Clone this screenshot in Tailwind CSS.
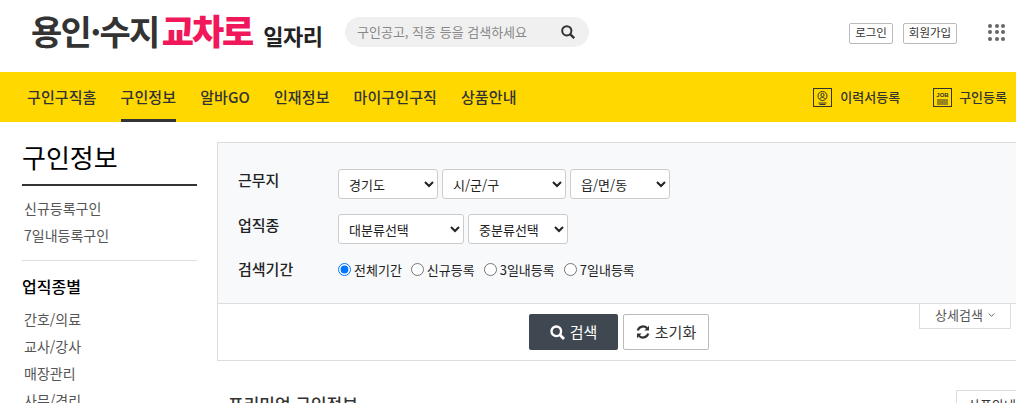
<!DOCTYPE html>
<html lang="ko">
<head>
  <meta charset="UTF-8" />
  <title>구인정보</title>
  <script src="https://cdn.jsdelivr.net/npm/@tailwindcss/browser@4"></script>
</head>
<body class="h-[403px] w-[1016px] overflow-hidden bg-white font-['Noto_Sans_CJK_KR',sans-serif] text-[#333]">

  <!-- 상단 헤더 -->
  <header class="flex h-[72px] items-center pb-[8px]">
    <a href="#" class="ml-[31px] flex w-[292px] items-baseline whitespace-nowrap">
      <span class="text-[34px] leading-[44px] font-bold tracking-[-1.7px] text-[#333]">용인·수지</span>
      <span class="ml-[3px] text-[35px] leading-[44px] font-black tracking-[-2px] text-[#f0185a]">교차로</span>
      <span class="ml-[11px] text-[22px] leading-[44px] font-bold tracking-[-0.5px] text-[#222]">일자리</span>
    </a>
    <div class="ml-[22px] flex h-[30px] w-[244px] items-center justify-between rounded-full bg-[#f0f0f0] pr-[14px] pl-[12px]">
      <span class="text-[13px] text-[#888]">구인공고, 직종 등을 검색하세요</span>
      <svg class="h-[14px] w-[14px]" viewBox="0 0 14 14" fill="none" stroke="#333" stroke-width="2"><circle cx="5.8" cy="5.8" r="4.6"/><path d="M9.2 9.2 13.2 13.2" stroke-width="2.4"/></svg>
    </div>
    <div class="ml-[260px] flex gap-[10px] pt-[2px]">
      <a href="#" class="flex h-[21px] w-[44px] items-center justify-center rounded-[2px] border border-[#bbb] text-[11.5px] text-[#333]">로그인</a>
      <a href="#" class="flex h-[21px] w-[54px] items-center justify-center rounded-[2px] border border-[#bbb] text-[11.5px] text-[#333]">회원가입</a>
    </div>
    <div class="ml-[31px] grid grid-cols-3 gap-[2.5px]">
      <i class="h-[4px] w-[4px] rounded-full bg-[#666]"></i><i class="h-[4px] w-[4px] rounded-full bg-[#666]"></i><i class="h-[4px] w-[4px] rounded-full bg-[#666]"></i>
      <i class="h-[4px] w-[4px] rounded-full bg-[#666]"></i><i class="h-[4px] w-[4px] rounded-full bg-[#666]"></i><i class="h-[4px] w-[4px] rounded-full bg-[#666]"></i>
      <i class="h-[4px] w-[4px] rounded-full bg-[#666]"></i><i class="h-[4px] w-[4px] rounded-full bg-[#666]"></i><i class="h-[4px] w-[4px] rounded-full bg-[#666]"></i>
    </div>
  </header>

  <!-- 메인 메뉴 -->
  <nav class="flex h-[50px] items-stretch bg-[#ffd800] pl-[27px] text-[15px] font-medium tracking-[0.1px] text-[#333]">
    <div class="flex gap-[24px]">
      <a href="#" class="flex items-center">구인구직홈</a>
      <a href="#" class="flex items-center border-b-[3px] border-[#333] pt-[3px]">구인정보</a>
      <a href="#" class="flex items-center">알바GO</a>
      <a href="#" class="flex items-center">인재정보</a>
      <a href="#" class="flex items-center">마이구인구직</a>
      <a href="#" class="flex items-center">상품안내</a>
    </div>
    <div class="ml-auto flex items-center pr-[9px] text-[13px] tracking-normal">
      <a href="#" class="flex items-center gap-[8px]">
        <svg class="h-[19px] w-[19px]" viewBox="0 0 19 19" fill="none" stroke="#333"><rect x=".5" y=".5" width="18" height="18"/><circle cx="9.5" cy="8" r="4.5"/><circle cx="9.5" cy="7" r="1.6"/><path d="M7 11c0-2 5-2 5 0M5.5 15h8M6.5 16.5h6"/></svg>
        이력서등록
      </a>
      <a href="#" class="ml-[33px] flex items-center gap-[7px]">
        <svg class="h-[19px] w-[19px]" viewBox="0 0 19 19" fill="none" stroke="#333"><rect x=".5" y=".5" width="18" height="18"/><text x="9.5" y="8.5" text-anchor="middle" font-size="6" font-weight="700" fill="#333" stroke="none" font-family="'Liberation Sans',sans-serif">JOB</text><path d="M4 12h11M4 14h11M4 16h11"/></svg>
        구인등록
      </a>
    </div>
  </nav>

  <div class="flex items-start">
    <!-- 왼쪽 메뉴 -->
    <aside class="ml-[22px] w-[175px] shrink-0">
      <h1 class="flex h-[64px] items-center border-b-2 border-[#333] pt-[8px] text-[26px] leading-none font-normal text-black">구인정보</h1>
      <ul class="mt-[9px] border-b border-[#ddd] pb-[11px] text-[14px] text-[#555]">
        <li class="flex h-[27px] items-center pl-[2px]">신규등록구인</li>
        <li class="flex h-[27px] items-center pl-[2px]">7일내등록구인</li>
      </ul>
      <h2 class="mt-[12px] flex h-[25px] items-center text-[16px] font-medium text-black">업직종별</h2>
      <ul class="mt-[8px] text-[14px] text-[#555]">
        <li class="flex h-[27px] items-center pl-[2px]">간호/의료</li>
        <li class="flex h-[27px] items-center pl-[2px]">교사/강사</li>
        <li class="flex h-[27px] items-center pl-[2px]">매장관리</li>
        <li class="flex h-[27px] items-center pl-[2px]">사무/경리</li>
      </ul>
    </aside>

    <!-- 검색 영역 -->
    <main class="ml-[20px] w-[799px] shrink-0 pt-[20px]">
      <section class="relative h-[219px] border-y border-l border-[#ddd]">
        <div class="h-[161px] border-b border-[#ddd] bg-[#f8f9fb] pt-[26px] pl-[20px] text-[15px]">
          <div class="flex items-start">
            <span class="w-[100px] font-medium text-[#222]">근무지</span>
            <div class="flex gap-[4px]">
              <select class="h-[30px] w-[100px] rounded-[3px] border border-[#ccc] bg-white pl-[6px] text-[13px] text-[#222]"><option>경기도</option></select>
              <select class="h-[30px] w-[124px] rounded-[3px] border border-[#ccc] bg-white pl-[6px] text-[13px] text-[#222]"><option>시/군/구</option></select>
              <select class="h-[30px] w-[100px] rounded-[3px] border border-[#ccc] bg-white pl-[6px] text-[13px] text-[#222]"><option>읍/면/동</option></select>
            </div>
          </div>
          <div class="mt-[15px] flex items-start">
            <span class="w-[100px] font-medium text-[#222]">업직종</span>
            <div class="flex gap-[4px]">
              <select class="h-[30px] w-[126px] rounded-[3px] border border-[#ccc] bg-white pl-[6px] text-[13px] text-[#222]"><option>대분류선택</option></select>
              <select class="h-[30px] w-[100px] rounded-[3px] border border-[#ccc] bg-white pl-[6px] text-[13px] text-[#222]"><option>중분류선택</option></select>
            </div>
          </div>
          <div class="mt-[14px] flex items-center">
            <span class="w-[100px] font-medium text-[#222]">검색기간</span>
            <div class="flex items-center gap-[9px] text-[13px] text-[#222]">
              <label class="flex items-center gap-[3px]"><input type="radio" name="period" checked class="m-0 h-[13px] w-[13px]">전체기간</label>
              <label class="flex items-center gap-[3px]"><input type="radio" name="period" class="m-0 h-[13px] w-[13px]">신규등록</label>
              <label class="flex items-center gap-[3px]"><input type="radio" name="period" class="m-0 h-[13px] w-[13px]">3일내등록</label>
              <label class="flex items-center gap-[3px]"><input type="radio" name="period" class="m-0 h-[13px] w-[13px]">7일내등록</label>
            </div>
          </div>
        </div>
        <div class="flex justify-start gap-[5px] pt-[10px] pl-[311px]">
          <button class="flex h-[36px] w-[89px] items-center justify-center gap-[5px] rounded-[2px] bg-[#3f4750] text-[15px] text-white">
            <svg class="h-[15px] w-[15px]" viewBox="0 0 15 15" fill="none" stroke="#fff" stroke-width="2.4"><circle cx="6.3" cy="6.3" r="4.8"/><path d="M9.8 9.8 14 14" stroke-width="2.8"/></svg>
            검색
          </button>
          <button class="flex h-[36px] w-[86px] items-center justify-center gap-[5px] rounded-[2px] border border-[#bbb] bg-white text-[15px] text-[#333]">
            <svg class="h-[14px] w-[14px]" viewBox="0 0 14 14" fill="none" stroke="#333" stroke-width="2.2"><path d="M1.8 5.6A5.4 5.4 0 0 1 11.6 4"/><path d="M12.2 8.4A5.4 5.4 0 0 1 2.4 10"/><path d="M13 .8v4.6H8.4z" fill="#333" stroke="none"/><path d="M1 13.2V8.6h4.6z" fill="#333" stroke="none"/></svg>
            초기화
          </button>
        </div>
        <a href="#" class="absolute top-[161px] left-[701px] flex h-[25px] w-[92px] items-center justify-center gap-[5px] border-x border-b border-[#ddd] bg-white pb-[2px] text-[13px] text-[#555]">
          상세검색
          <svg class="h-[6px] w-[7px]" viewBox="0 0 7 6" fill="none" stroke="#666"><path d="M.7 1.5 3.5 4.3 6.3 1.5"/></svg>
        </a>
      </section>
      <div class="mt-[29px] flex items-start justify-between">
        <h3 class="pl-[11px] text-[17px] leading-[28px] font-medium whitespace-nowrap text-[#333]">프리미엄 구인정보</h3>
        <a href="#" class="flex h-[28px] w-[60px] items-center overflow-hidden border-t border-l border-[#ddd] pl-[11px] text-[13px] whitespace-nowrap text-[#333]">상품안내</a>
      </div>
    </main>
  </div>

</body>
</html>
